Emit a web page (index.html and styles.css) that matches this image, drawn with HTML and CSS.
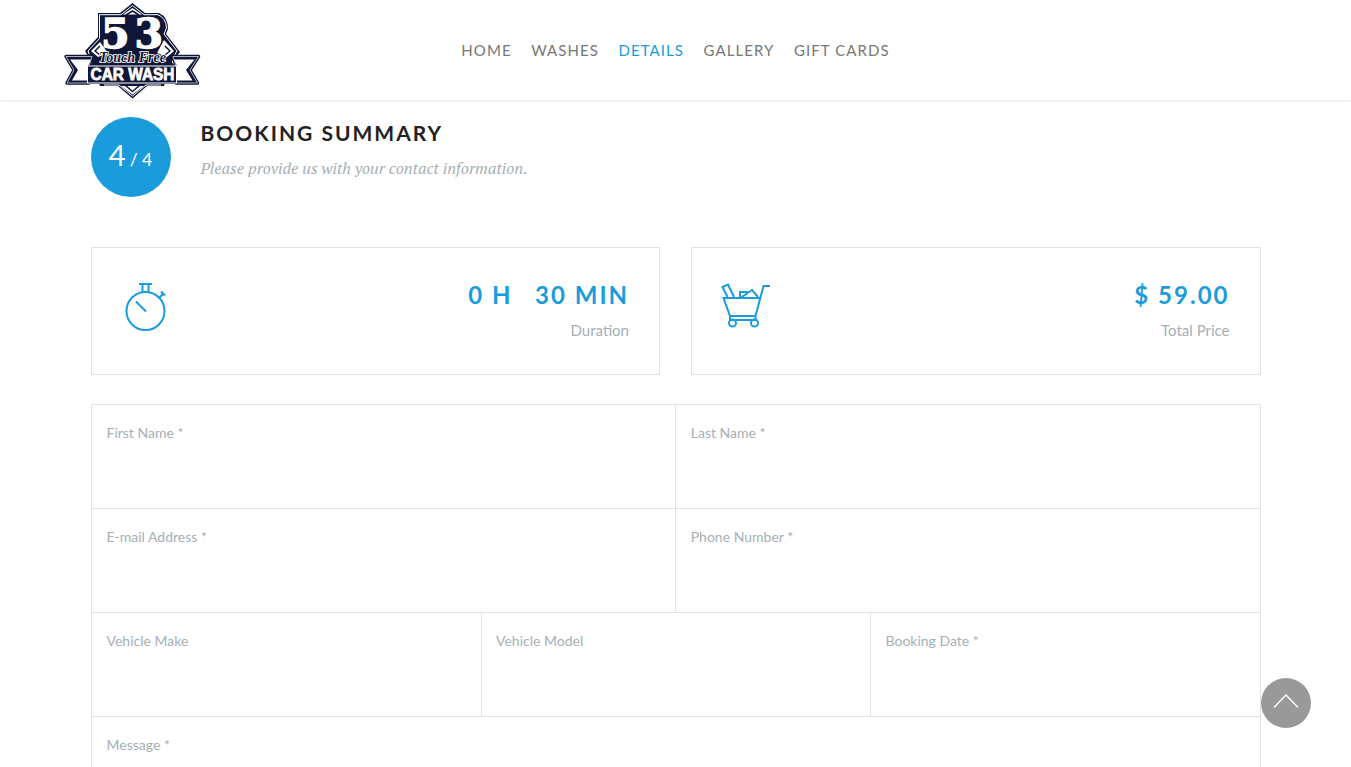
FILE: index.html
```html
<!DOCTYPE html>
<html lang="en">
<head>
<meta charset="utf-8">
<title>53 Touch Free Car Wash</title>
<link rel="stylesheet" href="styles.css">
</head>
<body>
<header class="header">
  <a class="logo">
    <svg width="145" height="100" viewBox="0 0 145 100">
      <g stroke-linejoin="round">
        <path class="ink" d="M72.500 3 85 13H99Q108 17 108 29L106 34 120 52 112 61 104 86H87L72.500 98.500 58 86H40L31 61 25 51 38 37V13H60Z"/>
        <path class="white-line" d="M29 54 28 51 39.500 38.500V14.700H61L72.500 5.500 84 14.700H98Q106 18 106.500 28L104 34 117 51 114 56M44 85H59L72.500 96 86 85H101"/>
        <path class="white" d="M63 14.500 72.500 8 82 14.500ZM40 42 31 51 38 57 48 53ZM104 40 114 51 107 57 97 53ZM61 86 72.500 94.500 84 86Z"/>
        <path class="ink-line" d="M66 15 72.500 11 79 15M40 46 35 51 40 55M105 46 110 51 105 55M65 85 72.500 91.500 80 85"/>
        <path class="ribbon-outer" d="M6 56.500H32L29 66V83H7L14 70ZM138.500 56.500H113L116 66V83H137.500L130 70Z"/>
        <path class="ribbon-inner" d="M6 56.500H32L29 66V83H7L14 70ZM138.500 56.500H113L116 66V83H137.500L130 70Z"/>
        <path class="ribbon-fill" d="M10 59.500H31L28 66V80.500H12L18 70ZM134.500 59.500H114L117 66V80.500H132.500L126 70Z"/>
        <path class="ink" d="M38 57H107L117 68V84H27V68Z"/>
      </g>
      <text class="logo-number" x="41" y="48" textLength="62">53</text>
      <text class="logo-script" x="39" y="62" textLength="67" lengthAdjust="spacingAndGlyphs">Touch Free</text>
      <rect class="logo-plate" x="27.500" y="66" width="89" height="17"/>
      <text class="logo-name" x="30.500" y="80" textLength="84" lengthAdjust="spacingAndGlyphs">CAR WASH</text>
    </svg>
  </a>
  <nav class="nav">
    <a>HOME</a><a>WASHES</a><a class="active">DETAILS</a><a>GALLERY</a><a>GIFT CARDS</a>
  </nav>
</header>
<main class="main">
  <section class="heading">
    <div class="step"><span class="step-current">4</span><span class="step-total">/ 4</span></div>
    <div>
      <h2 class="title">BOOKING SUMMARY</h2>
      <p class="subtitle">Please provide us with your contact information.</p>
    </div>
  </section>
  <section class="summary">
    <div class="card">
      <svg class="icon" width="50" height="50" viewBox="0 0 50 50">
        <circle cx="24.500" cy="28" r="19"/><path d="M18 1H31M21.500 1V9M27.500 1V9M15 18.500 25 28.500M38.500 14.500 42 11M40 8.500 44 12.500"/>
      </svg>
      <div class="amount"><div class="value"><span>0 H</span><span>30 MIN</span></div><div class="caption">Duration</div></div>
    </div>
    <div class="card">
      <svg class="icon" width="50" height="50" viewBox="0 0 50 50">
        <path d="M49 3H42.500L34.500 33H9L2.500 15H39M6.500 14 1.500 4 7 1.500 13 14M19 14V9H27M19.500 15 31 7 37 14M9 33V37H34.500V33"/><circle cx="11.500" cy="40" r="3.500"/><circle cx="33.500" cy="40" r="3.500"/>
      </svg>
      <div class="amount"><div class="value">$ 59.00</div><div class="caption">Total Price</div></div>
    </div>
  </section>
  <form class="form">
    <div class="row"><label class="field">First Name *</label><label class="field">Last Name *</label></div>
    <div class="row"><label class="field">E-mail Address *</label><label class="field">Phone Number *</label></div>
    <div class="row"><label class="field">Vehicle Make</label><label class="field">Vehicle Model</label><label class="field">Booking Date *</label></div>
    <div class="row last"><label class="field">Message *</label></div>
  </form>
</main>
<a class="to-top"><svg width="50" height="50" viewBox="0 0 50 50"><path d="M13 29.500 25 17 37 29.500"/></svg></a>
</body>
</html>
```
FILE: styles.css
```css
* { box-sizing: border-box; }
body { margin: 0; background: #fff; font-family: Lato, sans-serif; }
.header { position: relative; height: 100px; padding-left: 60px; display: flex; background: #fff; box-shadow: 0 1px 3px rgba(0,0,0,.1); }
.logo { width: 145px; height: 100px; }
.ink { fill: #101638; }
.ink-line { fill: none; stroke: #101638; stroke-width: 1.500; }
.white { fill: #fff; }
.white-line { fill: none; stroke: #fff; stroke-width: 1; }
.ribbon-outer { fill: #101638; stroke: #101638; stroke-width: 3.400; }
.ribbon-inner { fill: none; stroke: #d5d7e0; stroke-width: .8; }
.ribbon-fill { fill: #fff; }
.logo-number { font: 700 41px "DejaVu Serif", serif; fill: #fff; stroke: #fff; stroke-width: 1.400; }
.logo-script { font: italic 700 14px "Liberation Serif", serif; fill: #101638; stroke: #fff; stroke-width: 1.600; paint-order: stroke; }
.logo-plate { fill: #101638; stroke: #fff; stroke-width: 1; }
.logo-name { font: 900 17px "Liberation Sans", sans-serif; fill: #fff; stroke: #fff; stroke-width: .8; }
.nav { display: flex; gap: 19.500px; margin-left: 256.300px; padding-top: 41px; font-size: 15px; line-height: 18px; letter-spacing: 1.070px; color: #777; white-space: nowrap; }
.active { color: #1a9cdc; }
.main { width: 1170px; height: 667px; overflow: hidden; margin: 0 auto; }
.heading { display: flex; gap: 30px; height: 147px; padding-top: 17px; }
.step { width: 80px; height: 80px; border-radius: 50%; background: #1a9cdc; color: #fff; display: flex; justify-content: center; align-items: baseline; gap: 4px; padding-top: 20px; }
.step-current { font-size: 29px; line-height: 36px; }
.step-total { font-size: 17.500px; }
.title { margin: 3px 0 0; font-size: 21px; line-height: 26px; letter-spacing: 2px; font-weight: 700; color: #222; }
.subtitle { margin: 11px 0 0; font: italic 16px/22px "PT Serif", "Liberation Serif", serif; color: #a5afb5; white-space: nowrap; }
.summary { display: grid; grid-template-columns: 569.500px 570px; gap: 30.500px; height: 128px; }
.card { height: 128px; display: flex; justify-content: space-between; border: 1px solid #e1e4e5; padding: 35px 30px 0; }
.icon { margin-left: -.6px; fill: none; stroke: #1a9cdc; stroke-width: 2; }
.amount { text-align: right; }
.value { font-size: 24px; line-height: 30px; margin-top: -3px; letter-spacing: 2px; font-weight: 700; color: #1a9cdc; display: flex; justify-content: flex-end; gap: 22.500px; }
.caption { margin-top: 10px; font-size: 15px; line-height: 20px; color: #a5afb5; }
.form { margin-top: 29px; border: 1px solid #e1e4e5; border-bottom: 0; }
.row { display: flex; height: 104px; }
.row + .row { border-top: 1px solid #e1e4e5; }
.row:first-child { height: 103px; }
.row.last { height: 51px; }
.field { flex: 1; padding: 19px 15px 0; border-right: 1px solid #e1e4e5; font-size: 14px; line-height: 17px; color: #a5afb5; }
.field + .field { padding-left: 14.500px; }
.field:last-child { border-right: 0; }
.to-top { position: fixed; left: 1261px; top: 678px; width: 50px; height: 50px; border-radius: 50%; background: #999; }
.to-top path { fill: none; stroke: #fff; stroke-width: 1.300; }
```
